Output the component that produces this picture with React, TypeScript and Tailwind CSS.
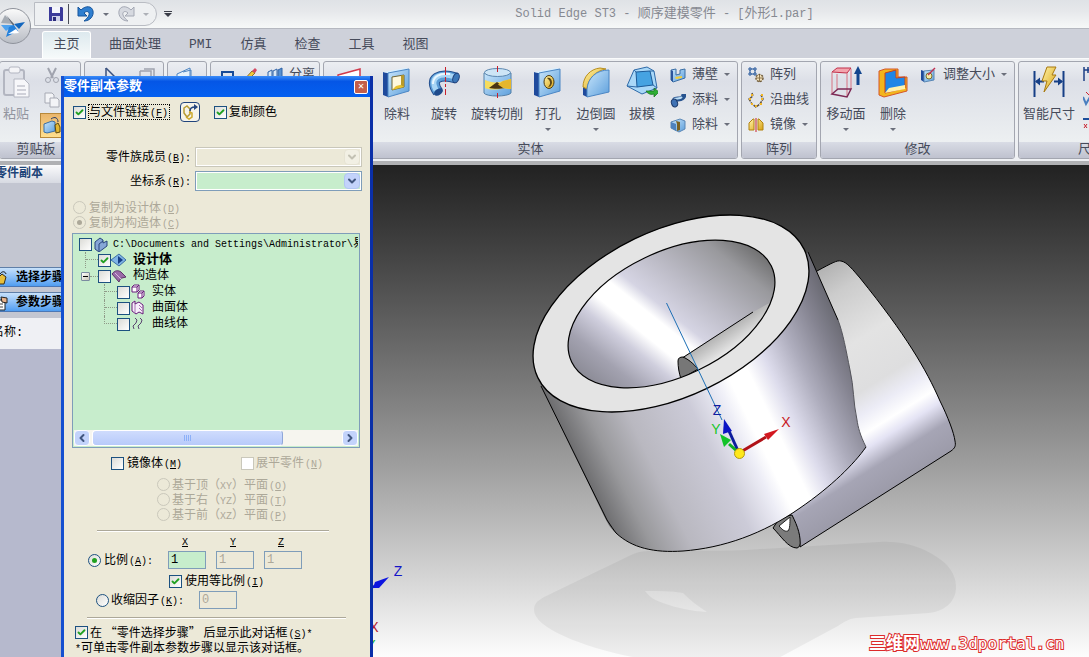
import type { ReactNode } from "react";
import { Check, ChevronDown, ChevronLeft, ChevronRight } from "lucide-react";

/* ---------- icons ---------- */

function Svg({ size = 32, children }: { size?: number; children: ReactNode }) {
    return (
        <svg width={size} height={size} viewBox={`0 0 ${size} ${size}`} fill="none" className="shrink-0">
            {children}
        </svg>
    );
}

function IconDefs() {
    return (
        <svg width="0" height="0" className="absolute">
            <defs>
                <linearGradient id="blueFace" x1="0" y1="0" x2="1" y2="1">
                    <stop offset="0" stopColor="#c9e6fb" />
                    <stop offset="1" stopColor="#5d9fdc" />
                </linearGradient>
                <linearGradient id="goldFace" x1="0" y1="0" x2="1" y2="1">
                    <stop offset="0" stopColor="#fff3a8" />
                    <stop offset="1" stopColor="#d9a417" />
                </linearGradient>
            </defs>
        </svg>
    );
}

const CutoutIcon = () => (
    <Svg>
        <path d="M2 6l5 1v24l-5-2z" fill="#1f4a9c" />
        <path d="M2 6l5 1 21-3-3-2z" fill="#d8efff" />
        <path d="M7 7l21-4v22L7 31z" fill="url(#blueFace)" stroke="#4b86c4" />
        <path d="M11 11l12-2v12l-12 3z" fill="#fff8dc" stroke="#6d6330" />
        <path d="M11 24l4-4 8-2v3l-12 3z" fill="#e8c22e" />
        <path d="M20 9.500l3-.5v12l-3-2z" fill="#b99a2a" />
    </Svg>
);

const RevolveIcon = () => (
    <Svg>
        <path d="M10 26C0 12 12 7 28 12" stroke="#234f8f" strokeWidth="11" />
        <path d="M10 26C0 12 12 7 28 12" stroke="#5b9cd6" strokeWidth="9" />
        <path d="M8 24C1 11 12 6 27 11" stroke="#a9d6f6" strokeWidth="5" />
        <path d="M5 18C5 10 12 7 22 8" stroke="#eaf7ff" strokeWidth="2" />
        <ellipse cx="28" cy="12" rx="3" ry="5" fill="#3c77b8" stroke="#1d3f7a" transform="rotate(20 28 12)" />
        <ellipse cx="10.500" cy="26" rx="5" ry="3" fill="#1f4b8c" transform="rotate(-35 10.5 26)" />
        <path d="M17.500 1v8m0 2v5m0 2v3m0 2v6" stroke="#c8202c" />
    </Svg>
);

const RevolveCutIcon = () => (
    <Svg>
        <path d="M3 7v20c2 4 24 4 27 0V7z" fill="url(#blueFace)" stroke="#5580a8" />
        <path d="M4 14c6 3 14 3 18 1l8-2v10l-8-1c-5 2-13 2-18 0z" fill="#f7dd5c" />
        <path d="M8 22l8-6 8 6c-4 1-12 1-16 0z" fill="#4a3413" />
        <path d="M22 15l8-2v10l-8-1-5-3.500z" fill="#e5b62b" />
        <ellipse cx="16.500" cy="6.500" rx="13" ry="4" fill="#cde5f6" stroke="#5c87b0" />
        <path d="M16.500 0v6m0 21v5" stroke="#c8202c" />
    </Svg>
);

const HoleIcon = () => (
    <Svg>
        <path d="M2 6l5 1v24l-5-2z" fill="#1f4a9c" />
        <path d="M2 6l5 1 21-3-3-2z" fill="#d8efff" />
        <path d="M7 7l21-4v22L7 31z" fill="url(#blueFace)" stroke="#4b86c4" />
        <ellipse cx="17" cy="16" rx="5" ry="6.500" fill="url(#goldFace)" stroke="#4c3d16" />
        <path d="M15 12c3-1 5 1 5 5-1 3-2 4-4 4 3-3 3-6-1-9z" fill="#5b4616" />
    </Svg>
);

const RoundIcon = () => (
    <Svg>
        <path d="M3 20l4 2v9l-4-2z" fill="#1f4a9c" />
        <path d="M3 21C3 11 10 3 20 2l6 1C15 5 8 13 7 23z" fill="url(#goldFace)" stroke="#b98e1c" />
        <path d="M7 31v-8C8 12 16 4 29 4v22z" fill="url(#blueFace)" stroke="#4b86c4" />
    </Svg>
);

const DraftIcon = () => (
    <Svg>
        <path d="M8 4l13-3 7 4 3 17-15 6-15-8z" fill="#a9d8f8" stroke="#2f6aa8" />
        <path d="M10 6l14-1 3 14-16 2z" fill="#46a3e2" stroke="#1c5a98" />
        <path d="M8 4l2 2M28 5l-4 0M1 20l10 1M27 19l4 3" stroke="#2f6aa8" />
        <path d="M20 25c2 3 5 4 8 3v3l5-5-5-4v3c-3 0-5 0-8 0z" fill="#2fae35" stroke="#14701a" strokeWidth="0.7" />
    </Svg>
);

const MoveFaceIcon = () => (
    <Svg>
        <path d="M2 6l5-4h14l-4 5z" fill="#f3a5ae" stroke="#c2304a" />
        <path d="M2 6v22M17 7v24M21 3v20M7 8v15" stroke="#d87282" />
        <path d="M2 28l6-5h13l-4 8z" stroke="#7d2a55" strokeWidth="1.500" />
        <path d="M28 19V5" stroke="#12458e" strokeWidth="3" />
        <path d="M24 8l4-8 4 8z" fill="#12458e" />
    </Svg>
);

const DeleteFaceIcon = () => (
    <Svg>
        <path d="M2 5l6-2 13 0v8l9 0v14L7 31l-5-2z" fill="#f2b51d" stroke="#d4552a" />
        <path d="M8 7l11-3v8l9-1v11L8 27z" fill="#1f86e6" stroke="#c9401c" />
        <path d="M8 27l4-5 16-3v4z" fill="#fff2ae" />
    </Svg>
);

const SmartDimIcon = () => (
    <Svg>
        <path d="M1.500 5v26M30.500 5v26" stroke="#163f86" strokeWidth="2" />
        <path d="M3 15.500h8M21 15.500h8" stroke="#163f86" strokeWidth="2" />
        <path d="M2 15.500l5-4v8zM30 15.500l-5-4v8z" fill="#163f86" />
        <path d="M14 1h9l-4 8h4L11 26l3-11h-5z" fill="url(#goldFace)" stroke="#a8790f" />
    </Svg>
);

const ExtrudeIcon = () => (
    <Svg>
        <path d="M5 9l22-6v10H5z" fill="#fff" stroke="#d13a4c" strokeWidth="1.500" />
        <path d="M5 13l22-2v18H5z" fill="url(#blueFace)" />
    </Svg>
);

const PasteIcon = () => (
    <Svg>
        <rect x="4" y="4" width="20" height="25" rx="2" fill="#dfe1e8" stroke="#b3b6c1" strokeWidth="2" />
        <rect x="9" y="1" width="11" height="6" rx="2" fill="#f4f4f7" stroke="#b3b6c1" />
        <path d="M14 13h10l5 5v13H14z" fill="#f7f7fa" stroke="#b3b6c1" />
        <path d="M17 20h8M17 24h9M17 28h9" stroke="#c3c5ce" strokeWidth="1.500" />
    </Svg>
);

const ThinWallIcon = () => (
    <Svg size={16}>
        <path d="M1 3l5-1v6l4-1V3l5-1v9L3 15l-2-2z" fill="url(#blueFace)" stroke="#3a6ea5" />
        <path d="M5 10l7-1v2l-6 1z" fill="#f3cf3a" />
        <path d="M1 3l2 1v11l-2-2z" fill="#2b559c" />
    </Svg>
);

const AddIcon = () => (
    <Svg size={16}>
        <path d="M4 8c2-2 6 0 8-2 2-1 2-3 2-4" stroke="#27538f" strokeWidth="5" />
        <path d="M4 7c3-1 6 0 8-2" stroke="#b9dcf5" strokeWidth="2" />
        <ellipse cx="4.500" cy="11" rx="3" ry="4" fill="#3f72b4" stroke="#1f3d6e" transform="rotate(-20 4.5 11)" />
    </Svg>
);

const CutIcon = () => (
    <Svg size={16}>
        <path d="M1 5l9-3 5 2v8l-6 3-8-4z" fill="url(#blueFace)" stroke="#5b87b5" />
        <path d="M6 4l4 1v8l-3 1V7z" fill="#7a6224" />
        <path d="M1 5l5 2v7l-5-3z" fill="#4e82bd" />
    </Svg>
);

const PatternIcon = () => (
    <Svg size={16}>
        <path d="M1 1h2v2H1zM6 1h2v2H6zM1 6h2v2H1zM6 6h2v2H6zM3 2h3M2 3v3M7 3v3M3 7h3" stroke="#27599c" />
        <circle cx="11.500" cy="11" r="3.500" fill="#f5e3bc" stroke="#6e5a3b" strokeDasharray="2 1" strokeWidth="1.500" />
        <path d="M8 11h7M11.500 8v7" stroke="#8a744e" />
    </Svg>
);

const AlongCurveIcon = () => (
    <Svg size={16}>
        <path d="M4 1l1 3-4 3 3 5 4 3 4-3 3-5-2-4" stroke="#5d4f3f" strokeWidth="1.500" strokeDasharray="3 1" />
        <path d="M3 3h2M1 7h2M3 12h2M7 14h2M12 12h2M13 7h2M13 3h2" stroke="#f1b524" strokeWidth="2" />
    </Svg>
);

const MirrorIcon = () => (
    <Svg size={16}>
        <path d="M1 6l4-4 1 0v11H1zM15 6l-4-4h-1v11h5z" fill="url(#goldFace)" stroke="#b3820f" />
        <path d="M8 1v14" stroke="#c8202c" />
    </Svg>
);

const ResizeIcon = () => (
    <Svg size={16}>
        <path d="M0 3l3 1v11l-3-2z" fill="#1f4a9c" />
        <path d="M3 4l10-1v10L3 15z" fill="url(#blueFace)" stroke="#5b87b5" />
        <circle cx="8" cy="9" r="3" fill="#f6eda8" stroke="#7c6d2c" />
        <path d="M7 8l7-7" stroke="#c03050" strokeWidth="1.500" />
    </Svg>
);

/* ---------- ribbon ---------- */

function Arrow() {
    return <span className="border-x-[3px] border-t-[3px] border-x-transparent border-t-[#6b6f7b]" />;
}

function BigButton({ icon, label, width, menu }: { icon: ReactNode; label: string; width: string; menu?: boolean }) {
    return (
        <button className={`flex shrink-0 flex-col items-center pt-1 ${width}`}>
            {icon}
            <span className="mt-2 h-[18px] leading-[18px] whitespace-nowrap">{label}</span>
            {menu && <span className="mt-1 flex"><Arrow /></span>}
        </button>
    );
}

function SmallButton({ icon, label, menu }: { icon: ReactNode; label: string; menu?: boolean }) {
    return (
        <button className="flex h-[25px] items-center gap-[6px] whitespace-nowrap">
            {icon}
            <span>{label}</span>
            {menu && <Arrow />}
        </button>
    );
}

function Group({ title, width, children }: { title?: string; width: string; children: ReactNode }) {
    return (
        <section className={`flex h-[98px] flex-col overflow-hidden rounded-[3px] border border-[#a3a6b0] bg-linear-to-b from-[#eceef2] from-0% via-[#dcdfe7] via-20% to-[#f1f4f4] ${width}`}>
            <div className="flex h-20 min-w-0">{children}</div>
            <h2 className="h-4 bg-linear-to-b from-[#d9dce5] to-[#bfc2cf] text-center leading-4">{title}</h2>
        </section>
    );
}

function Ribbon() {
    return (
        <div className="flex h-[107px] shrink-0 gap-[3px] overflow-hidden border-t border-[#fafbfc] border-b-4 border-b-[#b0b1b4] bg-[#eef0f3] pt-[2px] text-[13px] text-[#464b5a]">
            <Group title="剪贴板" width="w-[82px] shrink-0 -ml-px pr-[8px]">
                <button className="flex w-8 shrink-0 flex-col items-center pt-1 text-[#92959f]">
                    <PasteIcon />
                    <span className="mt-2 leading-[18px] whitespace-nowrap">粘贴</span>
                </button>
                <div className="flex w-9 shrink-0 flex-col items-start pl-2">
                    <button className="flex h-[25px] items-center pl-1" aria-label="剪切">
                        <Svg size={16}>
                            <path d="M4 1l5 10M12 1L7 11" stroke="#a0a3ae" strokeWidth="2" />
                            <circle cx="4" cy="13" r="2.500" stroke="#a0a3ae" />
                            <circle cx="12" cy="13" r="2.500" stroke="#a0a3ae" />
                        </Svg>
                    </button>
                    <button className="flex h-[25px] items-center pl-1" aria-label="复制">
                        <Svg size={16}>
                            <path d="M1 1h7l2 2v8H1z" fill="#f3f4f7" stroke="#a7aab4" />
                            <path d="M6 6h7l2 2v7H6z" fill="#f3f4f7" stroke="#a7aab4" />
                        </Svg>
                    </button>
                    <button className="mt-px flex h-[25px] w-[26px] items-center border border-[#b8893a] bg-linear-to-b from-[#e9b56c] to-[#ffdf8e] pl-[2px]" aria-label="零件副本">
                        <Svg size={20}>
                            <path d="M1 8l8-3 3 1v9l-8 2-3-1z" fill="url(#blueFace)" stroke="#3a6ea5" />
                            <path d="M8 3c4-3 7-1 7 3" stroke="#233a6a" />
                            <path d="M12 9l3-2 2 4v5l-4 1z" fill="#e2b631" stroke="#5c4a12" />
                        </Svg>
                    </button>
                </div>
            </Group>
            <Group width="w-[80px] shrink-0">
                <Svg size={70}>
                    <path d="M21 6v22l6-6 4 9" stroke="#39507e" strokeWidth="1.500" />
                    <path d="M21 6l14 14" stroke="#39507e" strokeWidth="1.500" />
                    <path d="M59 7h10v10M55 9h11v11M55 9v12" stroke="#a0a3ae" strokeWidth="1.500" />
                </Svg>
            </Group>
            <Group width="w-[40px] shrink-0">
                <Svg size={38}>
                    <path d="M9 12l13-6v20H9z" fill="#e6f2fb" stroke="#4c83c0" />
                    <path d="M15 10l8-2v14" stroke="#4c83c0" />
                </Svg>
            </Group>
            <Group width="w-[110px] shrink-0">
                <div className="flex h-[25px] items-center gap-[6px] pl-[10px]">
                    <Svg size={14}><rect x="1" y="4" width="11" height="9" stroke="#174a97" strokeWidth="2" /></Svg>
                    <Svg size={16}>
                        <path d="M2 14l9-10 3 2-9 9z" fill="#f3c93d" stroke="#91702b" />
                        <path d="M11 4l3-3 2 2-2 3z" fill="#d54a63" />
                        <path d="M2 15l1-4 3 3z" fill="#372a22" />
                    </Svg>
                    <button className="ml-1 flex items-center gap-[6px] whitespace-nowrap">
                        <Svg size={16}>
                            <path d="M1 5l4-2v11l-4 1zM6 4l4-2v11l-4 1z" fill="#d9e8f6" stroke="#2f62a6" />
                            <path d="M11 3l4-2v11l-4 1z" fill="#5790cf" stroke="#2f62a6" />
                        </Svg>
                        分离
                    </button>
                </div>
            </Group>
            <Group title="实体" width="w-[415px] shrink-0">
                <BigButton icon={<ExtrudeIcon />} label="拉伸" width="w-[50px]" />
                <BigButton icon={<CutoutIcon />} label="除料" width="w-[46px]" />
                <BigButton icon={<RevolveIcon />} label="旋转" width="w-12" />
                <BigButton icon={<RevolveCutIcon />} label="旋转切削" width="w-[58px]" />
                <BigButton icon={<HoleIcon />} label="打孔" width="w-11" menu />
                <BigButton icon={<RoundIcon />} label="边倒圆" width="w-[52px]" menu />
                <BigButton icon={<DraftIcon />} label="拔模" width="w-10" />
                <div className="ml-2 flex flex-col">
                    <SmallButton icon={<ThinWallIcon />} label="薄壁" menu />
                    <SmallButton icon={<AddIcon />} label="添料" menu />
                    <SmallButton icon={<CutIcon />} label="除料" menu />
                </div>
            </Group>
            <Group title="阵列" width="w-[76px] shrink-0">
                <div className="ml-[6px] flex flex-col">
                    <SmallButton icon={<PatternIcon />} label="阵列" />
                    <SmallButton icon={<AlongCurveIcon />} label="沿曲线" />
                    <SmallButton icon={<MirrorIcon />} label="镜像" menu />
                </div>
            </Group>
            <Group title="修改" width="w-[195px] shrink-0">
                <BigButton icon={<MoveFaceIcon />} label="移动面" width="w-[50px]" menu />
                <BigButton icon={<DeleteFaceIcon />} label="删除" width="w-11" menu />
                <div className="ml-[6px] flex flex-col">
                    <SmallButton icon={<ResizeIcon />} label="调整大小" menu />
                </div>
            </Group>
            <Group title="尺寸" width="w-[146px] shrink-0">
                <BigButton icon={<SmartDimIcon />} label="智能尺寸" width="w-[60px]" />
                <div className="ml-1 flex flex-col gap-[9px] pt-1">
                    <Svg size={16}><path d="M1 1v14M1 4h8M5 1v6" stroke="#1d3f86" strokeWidth="1.500" /></Svg>
                    <Svg size={16}><path d="M0 6l3 7 4-7" stroke="#4a7fc0" strokeWidth="2" /><path d="M3 1l4 4" stroke="#c8202c" /></Svg>
                    <Svg size={16}><path d="M0 3h10v10" stroke="#1d4f9c" strokeWidth="2" /><path d="M1 8l3 4M4 8l-3 4" stroke="#c8202c" /></Svg>
                </div>
            </Group>
        </div>
    );
}

function TitleBar() {
    return (
        <header className="flex h-7 shrink-0 items-center bg-linear-to-b from-[#dfe2e6] via-[#e6e8eb] via-40% to-[#f6f8f8] pl-[34px]">
            <div className="flex h-6 w-[123px] items-center gap-1 rounded-r-full border border-[#b9bcc3] bg-[#eef0f2] pl-[13px]">
                <button aria-label="保存">
                    <Svg size={16}>
                        <path d="M1 1h13l1 1v13H1z" fill="#3b3a9a" />
                        <path d="M4 1h8v6H4z" fill="#f4f5fc" />
                        <path d="M4 10h8v5H4z" fill="#cfd2ea" />
                        <path d="M5 11h3v4H5z" fill="#2c2b7a" />
                    </Svg>
                </button>
                <span className="h-5 w-px bg-[#4a4d58]" />
                <button className="ml-1" aria-label="撤消">
                    <Svg size={18}>
                        <path d="M1 2v9h9l-3-3c3-3 6-1 5 2-1 3-3 4-5 6 6 0 10-5 9-10C15 1 9 0 4 5z" fill="#2f7fd0" stroke="#17559c" />
                    </Svg>
                </button>
                <span className="mx-1 flex"><Arrow /></span>
                <button aria-label="重做">
                    <Svg size={18}>
                        <path d="M17 2v9H8l3-3C8 5 5 7 6 10c1 3 3 4 5 6C5 16 1 11 2 6 3 1 9 0 14 5z" fill="#d6d9e0" stroke="#a4a8b4" />
                    </Svg>
                </button>
                <span className="ml-1 flex opacity-50"><Arrow /></span>
            </div>
            <button className="ml-[7px] flex flex-col items-center gap-px" aria-label="自定义">
                <span className="h-px w-2 bg-[#3a3d48]" />
                <span className="border-x-4 border-t-4 border-x-transparent border-t-[#3a3d48]" />
            </button>
            <h1 className="flex-1 pl-[68px] text-center text-[13px] whitespace-pre text-[#868991]">
                <span className="text-[12px]">Solid Edge ST3 - </span>顺序建模零件<span className="text-[12px]"> - [</span>外形<span className="text-[12px]">1.par]</span>
            </h1>
            <button className="absolute top-2 -left-[5px] size-9 rounded-full border border-[#8f939c] bg-linear-to-b from-[#fafafa] to-[#b9bdc5]" aria-label="应用程序按钮">
                <svg viewBox="0 0 34 34" className="size-full">
                    <path d="M9 6l8 9-12-1z" fill="#a5abb3" />
                    <path d="M5 16l13 0-8 6z" fill="#4ea2ee" />
                    <path d="M10 6l8 9 0 3z" fill="#5f6772" />
                    <path d="M18 15l11-2-6 7z" fill="#1266bd" />
                    <path d="M10 28l3-10 5-2 4 6z" fill="#2380dc" />
                    <path d="M12 25l8-5 3 4z" fill="#fff" />
                </svg>
            </button>
        </header>
    );
}

const tabs = ["曲面处理", "PMI", "仿真", "检查", "工具", "视图"];

function Tabs() {
    return (
        <nav className="flex h-[30px] shrink-0 items-end border-t border-[#b5b8c0] bg-[#ced1da] pl-[42px] text-[13px] text-[#464b5a]">
            <button className="h-[27px] w-[49px] rounded-t-[3px] border border-b-0 border-white bg-linear-to-b from-[#dde9ee] to-[#f6fafa]">主页</button>
            <div className="ml-1 flex">
                {tabs.map((t) => (
                    <button key={t} className="h-[27px] px-[14px]">{t}</button>
                ))}
            </div>
        </nav>
    );
}

/* ---------- left pane ---------- */

function StepButton({ icon, label }: { icon: ReactNode; label: string }) {
    return (
        <button className="-ml-2 flex h-5 items-center gap-2 overflow-hidden border-y border-t-[#5f7fa8] border-b-[#4b77b5] bg-linear-to-b from-[#c7e1fb] to-[#4f9df0] pt-px font-bold whitespace-nowrap text-black">
            {icon}
            {label}
        </button>
    );
}

function SidePane() {
    return (
        <aside className="flex w-[371px] shrink-0 flex-col overflow-hidden bg-[#b6b9cd] text-[12px]">
            <h2 className="h-[18px] bg-linear-to-b from-[#fbfbfc] to-[#d7dae2] leading-[18px] font-bold text-[#1d4478]"><span className="-ml-[5px]">零件副本</span></h2>
            <div className="flex flex-col gap-[5px] bg-[#c3c6d1] pt-[84px] pb-[6px]">
                <StepButton
                    label="选择步骤"
                    icon={<Svg size={16}><path d="M5 9l5-5 4 3-2 7H4z" fill="#e8bf3a" stroke="#3c2f10" /><path d="M8 4c2-3 5-3 6 0" stroke="#111" /></Svg>}
                />
                <StepButton
                    label="参数步骤"
                    icon={<Svg size={16}><path d="M3 5h10v10H3z" fill="#fff" stroke="#222" /><path d="M9 2l6 1v5l-5-1z" fill="#e9b48c" stroke="#222" /><path d="M5 9h6M5 12h6" stroke="#444" /></Svg>}
                />
            </div>
            <div className="h-[31px] bg-[#eff0f4] leading-[30px]"><span className="-ml-[8px]">名称:</span></div>
        </aside>
    );
}

/* ---------- dialog ---------- */

function Tick({ id, checked, disabled }: { id: string; checked?: boolean; disabled?: boolean }) {
    return (
        <span className="relative flex size-[13px] shrink-0">
            <input
                id={id}
                type="checkbox"
                defaultChecked={checked}
                disabled={disabled}
                className="peer size-[13px] appearance-none border border-[#1c5180] bg-linear-to-br from-[#dcdcd7] to-white disabled:border-[#cac8bb] disabled:bg-none disabled:bg-white"
            />
            <Check className="pointer-events-none absolute top-0.5 left-0.5 hidden size-[9px] text-[#21a121] peer-checked:block" strokeWidth={5} />
        </span>
    );
}

function Radio({ id, name, checked, disabled }: { id: string; name: string; checked?: boolean; disabled?: boolean }) {
    return (
        <span className="relative flex size-[13px] shrink-0">
            <input
                id={id}
                name={name}
                type="radio"
                defaultChecked={checked}
                disabled={disabled}
                className="peer size-[13px] appearance-none rounded-full border border-[#1c5180] bg-linear-to-br from-[#dcdcd7] to-white disabled:border-[#cac8bb] disabled:bg-none"
            />
            <span className="pointer-events-none absolute top-1 left-1 hidden size-[5px] rounded-full bg-[#21a121] peer-checked:block peer-disabled:bg-[#aca899]" />
        </span>
    );
}

/* access key in brackets, set a size smaller than the Chinese text */
function Key({ k, after = "" }: { k: string; after?: string }) {
    return <span className="ml-px text-[10px]">(<u>{k}</u>){after}</span>;
}

function Caption({ id, className = "", children }: { id: string; className?: string; children: ReactNode }) {
    return <label htmlFor={id} className={`pt-[2px] whitespace-nowrap ${className}`}>{children}</label>;
}

function Combo({ id, disabled }: { id: string; disabled?: boolean }) {
    return (
        <span className="relative h-5 w-[167px]">
            <select
                id={id}
                disabled={disabled}
                className="block h-5 w-full appearance-none border border-[#7f9db9] bg-[#c7edcc] ring-1 ring-white ring-inset disabled:border-[#c9c7ba] disabled:bg-[#ece9d8]"
            />
            <span className={`pointer-events-none absolute top-0.5 right-0.5 flex h-4 w-4 items-center justify-center rounded-sm border ${disabled ? "border-[#e6e3d3] bg-[#f2f0e4] text-[#c3c1b3]" : "border-[#b1c6f3] bg-[#c3d3fb] text-[#41567f]"}`}>
                <ChevronDown className="size-3" strokeWidth={4} />
            </span>
        </span>
    );
}

function Branch({ last }: { last?: boolean }) {
    if (last) return <span className="h-2 w-[13px] self-start border-b border-l border-dotted border-[#8f9a88]" />;
    return (
        <span className="h-4 w-[13px] border-l border-dotted border-[#8f9a88]">
            <span className="block h-2 border-b border-dotted border-[#8f9a88]" />
        </span>
    );
}

const row = "flex h-4 items-center whitespace-nowrap";

function BodyTree() {
    return (
        <div className="mt-[3px] mr-[10px] ml-2 flex h-[215px] flex-col border border-[#7f9db9] bg-[#c7edcc] p-px">
            <ul className="flex-1 overflow-hidden pt-px text-[12px]">
                <li className={`${row} pl-[5px]`}>
                    <Tick id="t-root" />
                    <Svg size={16}><path d="M3 6l5-4 3 2v3l4-2v5l-8 6-4-3z" fill="#86a6d6" stroke="#29457f" /><path d="M7 8v7M7 8l4-3" stroke="#29457f" /></Svg>
                    <label htmlFor="t-root" className="ml-[5px]"><span className="text-[10px]">C:\Documents and Settings\Administrator\</span>易</label>
                </li>
                <li className={`${row} pl-[11px]`}>
                    <Branch />
                    <Tick id="t-design" checked />
                    <Svg size={16}><path d="M0 8l8-6 7 6-7 6z" fill="#7fb4e6" stroke="#3a6ea5" /><path d="M7 4v8l5-4z" fill="#163f86" /></Svg>
                    <label htmlFor="t-design" className="ml-[6px] text-[13px] font-bold">设计体</label>
                </li>
                <li className={`${row} pl-[7px]`}>
                    <button className="flex size-[9px] items-center justify-center rounded-[1px] border border-[#7b8ba0] bg-linear-to-br from-white to-[#c8c5b5]" aria-label="折叠">
                        <span className="h-px w-[5px] bg-black" />
                    </button>
                    <span className="w-2 border-t border-dotted border-[#8f9a88]" />
                    <Tick id="t-cons" />
                    <Svg size={16}><path d="M1 6c3-4 6-4 9-2l5 5-4 1c-1 0-2 1-3 4z" fill="#9a6aa8" stroke="#5c3468" /><path d="M4 5l6 6" stroke="#d9b9e0" /></Svg>
                    <label htmlFor="t-cons" className="ml-[6px]">构造体</label>
                </li>
                <li className={`${row} pl-[30px]`}>
                    <Branch />
                    <Tick id="t-solid" />
                    <Svg size={16}><path d="M2 3l2-2h5v5l-2 2H2zM2 3h5v5M7 3l2-2M8 9l2-2h4v5l-2 2H8zM8 9h4v5M12 9l2-2" fill="#fff" stroke="#6a1d7c" /></Svg>
                    <label htmlFor="t-solid" className="ml-[6px]">实体</label>
                </li>
                <li className={`${row} pl-[30px]`}>
                    <Branch />
                    <Tick id="t-surf" />
                    <Svg size={16}><path d="M2 3l3-2v3l4-2 4 3v9l-4-2-3 2-4-3z" fill="#f7eefa" stroke="#6a1d7c" /><path d="M5 4v9M9 5l3 3M9 8l3 3" stroke="#a573b2" /></Svg>
                    <label htmlFor="t-surf" className="ml-[6px]">曲面体</label>
                </li>
                <li className={`${row} pl-[30px]`}>
                    <Branch last />
                    <Tick id="t-curve" />
                    <Svg size={16}><path d="M5 2l2 2-1 3-3 3 1 3M10 2l2 2-1 3-3 3 1 3" stroke="#5a4470" /></Svg>
                    <label htmlFor="t-curve" className="ml-[6px]">曲线体</label>
                </li>
            </ul>
            <div className="flex h-4 justify-between bg-[#f6f5ef]">
                <button className="flex w-4 items-center justify-center rounded-sm border border-white bg-[#c3d3fb] text-[#41567f]" aria-label="向左"><ChevronLeft className="size-3" strokeWidth={4} /></button>
                <div className="mr-auto ml-0.5 flex w-[191px] items-center justify-center gap-px rounded-sm border border-white border-r-[#8fa6d8] bg-linear-to-b from-[#cfdcfd] to-[#b7cafa]">
                    <i className="h-[6px] w-px bg-[#8cb0f8]" /><i className="h-[6px] w-px bg-[#8cb0f8]" /><i className="h-[6px] w-px bg-[#8cb0f8]" /><i className="h-[6px] w-px bg-[#8cb0f8]" />
                </div>
                <button className="flex w-4 items-center justify-center rounded-sm border border-white bg-[#c3d3fb] text-[#41567f]" aria-label="向右"><ChevronRight className="size-3" strokeWidth={4} /></button>
            </div>
        </div>
    );
}

const planes = [
    { side: "顶", axes: "XY", k: "O" },
    { side: "右", axes: "YZ", k: "T" },
    { side: "前", axes: "XZ", k: "P" },
];

const field = "h-[18px] w-[38px] border border-[#7f9db9] bg-[#c7edcc] px-[2px] text-[12px] disabled:bg-[#ece9d8] disabled:text-[#aca899]";

function PartCopyDialog() {
    return (
        <div role="dialog" aria-label="零件副本参数" className="absolute top-[76px] bottom-0 left-[61px] flex w-[312px] flex-col overflow-hidden border-x-[3px] border-r-[#0a2fa8] border-l-[#1550d0] bg-[#ece9d8] text-[12px] text-black">
            <div className="flex h-[21px] shrink-0 items-center justify-between bg-linear-to-b from-[#3a8cf8] via-[#0556e6] via-25% to-[#0460f0] pr-[2px] text-[13px] font-bold text-white">
                零件副本参数
                <button className="flex size-[14px] items-center justify-center rounded-[2px] border border-white bg-[#c45f4a] text-[10px]" aria-label="关闭">✕</button>
            </div>

            <div className="flex h-[25px] shrink-0 items-center pt-[5px] pl-[9px]">
                <Tick id="link" checked />
                <label htmlFor="link" className="ml-[2px] flex h-4 items-center border border-dotted border-black pt-[2px] pr-px whitespace-nowrap">与文件链接<Key k="F" /></label>
                <button className="ml-[10px] flex size-5 items-center justify-center rounded-sm border border-[#21447c] bg-[#f6f4ea]" aria-label="更新链接">
                    <Svg size={16}>
                        <path d="M2 4l3-2 3 3v5l-3 3-3-4z" stroke="#b79c35" strokeWidth="1.500" />
                        <path d="M7 8l3 1v4l-3 2-3-2" stroke="#cda92c" strokeWidth="1.500" />
                        <path d="M8 7c0-3 2-4 5-4" stroke="#26477f" strokeWidth="1.500" />
                        <path d="M12 0l4 3-4 3z" fill="#26477f" />
                    </Svg>
                </button>
                <span className="ml-[14px] flex"><Tick id="color" checked /></span>
                <Caption id="color" className="ml-[2px]">复制颜色</Caption>
            </div>

            <div className="mt-[25px] flex h-5 items-center justify-end pr-2">
                <Caption id="family" className="mr-1">零件族成员<Key k="B" after=":" /></Caption>
                <Combo id="family" disabled />
            </div>
            <div className="mt-1 flex h-5 items-center justify-end pr-2">
                <Caption id="coord" className="mr-1">坐标系<Key k="R" after=":" /></Caption>
                <Combo id="coord" />
            </div>

            <div className="mt-[9px] pl-[9px] text-[#aca899]">
                <div className="flex h-[15px] items-center gap-[3px]">
                    <Radio id="as-design" name="copy-as" disabled />
                    <Caption id="as-design">复制为设计体<Key k="D" /></Caption>
                </div>
                <div className="flex h-[15px] items-center gap-[3px]">
                    <Radio id="as-cons" name="copy-as" checked disabled />
                    <Caption id="as-cons">复制为构造体<Key k="C" /></Caption>
                </div>
            </div>

            <BodyTree />

            <div className="mt-[7px] flex h-4 items-center gap-[3px] pl-[47px]">
                <Tick id="mirror" />
                <Caption id="mirror">镜像体<Key k="M" /></Caption>
                <span className="ml-14 flex items-center gap-[2px] text-[#aca899]">
                    <Tick id="flat" disabled />
                    <Caption id="flat">展平零件<Key k="N" /></Caption>
                </span>
            </div>

            <div className="mt-[6px] pl-[93px] text-[#aca899]">
                {planes.map((p) => (
                    <div key={p.axes} className="flex h-[15px] items-center gap-[2px]">
                        <Radio id={p.axes} name="plane" disabled />
                        <Caption id={p.axes}>基于{p.side}（<span className="text-[10px]">{p.axes}</span>）平面<Key k={p.k} /></Caption>
                    </div>
                ))}
            </div>

            <hr className="mt-2 mr-[41px] ml-[33px] border-t-[#aca899] border-b border-b-white" />

            <div className="mt-0.5 flex h-4 items-center gap-[10px] pl-[102px] text-center text-[10px]">
                <label htmlFor="sx" className="w-[38px]"><u>X</u></label>
                <label htmlFor="sy" className="w-[38px]"><u>Y</u></label>
                <label htmlFor="sz" className="w-[38px]"><u>Z</u></label>
            </div>
            <div className="mt-px flex h-[18px] items-center pl-6">
                <Radio id="scale" name="scale-mode" checked />
                <Caption id="scale" className="ml-[3px] w-16">比例<Key k="A" after=":" /></Caption>
                <div className="flex gap-[10px]">
                    <input id="sx" className={field} defaultValue="1" />
                    <input id="sy" className={field} defaultValue="1" disabled />
                    <input id="sz" className={field} defaultValue="1" disabled />
                </div>
            </div>
            <div className="mt-1 flex h-4 items-center gap-[3px] pl-[105px]">
                <Tick id="uniform" checked />
                <Caption id="uniform">使用等比例<Key k="I" /></Caption>
            </div>
            <div className="mt-0.5 flex h-[18px] items-center pl-8">
                <Radio id="shrink" name="scale-mode" />
                <Caption id="shrink" className="ml-[2px] w-[88px]">收缩因子<Key k="K" after=":" /></Caption>
                <input className={field} defaultValue="0" disabled aria-label="收缩因子" />
            </div>

            <hr className="mt-2 mr-6 ml-[23px] border-t-[#aca899] border-b border-b-white" />

            <div className="mt-[5px] flex h-4 items-center gap-[2px] pl-[11px]">
                <Tick id="show" checked />
                <Caption id="show">在<span className="font-['Noto_Sans_CJK_SC']"> “零件选择步骤” </span>后显示此对话框<Key k="S" after="*" /></Caption>
            </div>
            <p className="h-4 shrink-0 pl-[11px] leading-[18px] whitespace-nowrap"><span className="text-[10px]">*</span>可单击零件副本参数步骤以显示该对话框。</p>
        </div>
    );
}

/* ---------- 3D view ---------- */

function ModelView() {
    return (
        <main className="relative min-w-0 flex-1 bg-linear-to-b from-[#222222] via-[#858585] via-50% to-[#fdfdfd]">
            <svg viewBox="371 165 718 492" preserveAspectRatio="xMinYMin slice" className="absolute inset-0 size-full">
                <defs>
                    <linearGradient id="outer" gradientUnits="userSpaceOnUse" x1="538" y1="378" x2="804" y2="249">
                        <stop offset="0" stopColor="#6e6e70" />
                        <stop offset="0.1" stopColor="#99999c" />
                        <stop offset="0.22" stopColor="#b9b8c0" />
                        <stop offset="0.42" stopColor="#cccbd8" />
                        <stop offset="0.53" stopColor="#ededf6" />
                        <stop offset="0.58" stopColor="#ffffff" />
                        <stop offset="0.65" stopColor="#ffffff" />
                        <stop offset="0.72" stopColor="#dddcec" />
                        <stop offset="0.82" stopColor="#aeadbd" />
                        <stop offset="0.93" stopColor="#83828f" />
                        <stop offset="1" stopColor="#6b6b74" />
                    </linearGradient>
                    <linearGradient id="inner" gradientUnits="userSpaceOnUse" x1="572" y1="362" x2="771" y2="266">
                        <stop offset="0" stopColor="#85858f" />
                        <stop offset="0.15" stopColor="#a3a2b0" />
                        <stop offset="0.27" stopColor="#cfcedd" />
                        <stop offset="0.35" stopColor="#ffffff" />
                        <stop offset="0.44" stopColor="#ffffff" />
                        <stop offset="0.5" stopColor="#d5d4e3" />
                        <stop offset="0.65" stopColor="#bcbbc6" />
                        <stop offset="0.85" stopColor="#99999d" />
                        <stop offset="1" stopColor="#666666" />
                    </linearGradient>
                    <linearGradient id="arm" gradientUnits="userSpaceOnUse" x1="835" y1="262" x2="954" y2="452">
                        <stop offset="0" stopColor="#b4b4b4" />
                        <stop offset="0.12" stopColor="#cccccc" />
                        <stop offset="0.35" stopColor="#e3e3e3" />
                        <stop offset="0.55" stopColor="#dededf" />
                        <stop offset="0.64" stopColor="#ececf6" />
                        <stop offset="0.72" stopColor="#ffffff" />
                        <stop offset="0.78" stopColor="#e4e3f4" />
                        <stop offset="0.87" stopColor="#a6a5b5" />
                        <stop offset="1" stopColor="#9b9aa8" />
                    </linearGradient>
                    <linearGradient id="peg" gradientUnits="userSpaceOnUse" x1="715" y1="335" x2="727" y2="353">
                        <stop offset="0" stopColor="#b0b0b0" />
                        <stop offset="1" stopColor="#e8e8e8" />
                    </linearGradient>
                    <clipPath id="bore">
                        <ellipse cx="671.5" cy="314" rx="110.800" ry="62.200" transform="rotate(-25.7 671.5 314)" />
                    </clipPath>
                </defs>

                {/* shadow on the floor */}
                <path
                    d="M534 610c0-6 3-9 10-13l87-42c8-4 14-4 23-4 40-1 66 1 106-2l119-7c15-1 28 1 41 6 26 11 36 24 36 39 0 14-10 24-27 26l-73 5c-8 1-12 4-18 8l-65 35H655c-60-9-121-31-121-51zM645 591c5 6 9 9 18 12 14 5 28 8 44 9-8-5-16-11-24-19-12-2-25-2-38-2z"
                    fill="#000"
                    fillOpacity="0.05"
                    fillRule="evenodd"
                />

                {/* arm */}
                <path d="M773 528c8 8 15 20 24 20 6-2 5-14-4-34l-14 5z" fill="#7b7b7b" stroke="#000" />
                <path d="M779 526l11-9c0 6 0 12-2 14-4 1-6-2-9-5z" fill="#fff" stroke="#222" />
                <path
                    d="M800 547l151-96c4-3 5-5 4-10-1-8-7-24-15-40-14-32-34-66-80-123-7-8-13-16-19-17-4-1-9 2-24 10l-60 60v190l35-6c6 12 9 21 8 32z"
                    fill="url(#arm)"
                    stroke="#000"
                />

                {/* main tube */}
                <path
                    d="M538 380l66 136c4 8 6 12 12 17 16 15 38 20 67 18 40-3 80-17 117-43 32-22 54-44 66-61-6-12-8-20-9-27-4-18-3-33-7-50-4-20-7-37-12-50l-30-68-270 128z"
                    fill="url(#outer)"
                />
                <path d="M541 386l66 134c4 6 6 9 9 13 16 15 38 20 67 18 40-3 80-17 117-43 32-22 54-44 66-61M808 252l30 68" stroke="#000" fill="none" />
                <path d="M838 320c5 13 8 30 12 50 4 17 3 32 7 50 1 7 3 15 9 27" stroke="#55555c" fill="none" />
                <ellipse cx="671" cy="313.5" rx="147.800" ry="83" transform="rotate(-25.7 671 313.5)" fill="#e4e4e4" stroke="#000" strokeWidth="1.300" />
                <ellipse cx="671.5" cy="314" rx="110.800" ry="62.200" transform="rotate(-25.7 671.5 314)" fill="url(#inner)" />
                <g clipPath="url(#bore)">
                    <path d="M683 357l70-45 40-22v60l-95 20z" fill="url(#peg)" />
                    <path d="M678 361c0-3 2-4 5-4 5 2 11 7 15 12l-17 10c-2-6-3-12-3-18z" fill="#777" stroke="#000" />
                    <path d="M683 357.500L753 312" stroke="#000" />
                </g>
                <ellipse cx="671.5" cy="314" rx="110.800" ry="62.200" transform="rotate(-25.7 671.5 314)" fill="none" stroke="#000" strokeWidth="1.200" />

                {/* axes at the part origin */}
                <path d="M666.500 303L722 420" stroke="#1d6fb5" />
                <path d="M739 453l-10-22" stroke="#0c1c9c" strokeWidth="3" />
                <path d="M724 419l-1 15 9-3z" fill="#0c14c4" />
                <path d="M739 453l-10-9" stroke="#0fae22" strokeWidth="3" />
                <path d="M720 434l4 13 7-7z" fill="#12c328" />
                <path d="M739 453l27-16" stroke="#b01218" strokeWidth="3" />
                <path d="M779 429l-15 5 4 6z" fill="#d31820" />
                <circle cx="739.5" cy="453.5" r="5" fill="#ffe81a" stroke="#b29a10" />
                <g fontFamily="Liberation Sans" fontSize="14" textAnchor="middle">
                    <text x="717" y="415" fill="#101ca0">Z</text>
                    <text x="716" y="434" fill="#16c62a">Y</text>
                    <text x="786" y="427" fill="#c8181e">X</text>
                    <text x="398" y="576" fill="#1414c8">Z</text>
                    <text x="374" y="632" fill="#b01830">X</text>
                    <text x="371" y="650" fill="#16b62a">Y</text>
                </g>
                <path d="M360 594l14-8" stroke="#0c14c4" strokeWidth="3" />
                <path d="M389 577l-14 5-2 6h6z" fill="#0c14e0" />

                <text x="869" y="649" fontSize="17" fontFamily="Noto Sans CJK SC, sans-serif" fontWeight="bold" fill="#fff" stroke="#dc2a2a" strokeWidth="2" paintOrder="stroke">
                    三维网<tspan fontSize="16" fontWeight="normal" fontFamily="DejaVu Sans Mono">www.3dportal.cn</tspan>
                </text>
            </svg>
        </main>
    );
}

export default function App() {
    return (
        <div className="relative flex h-screen flex-col overflow-hidden bg-[#ced1da] font-['Liberation_Mono','Noto_Sans_CJK_SC',monospace]">
            <IconDefs />
            <TitleBar />
            <Tabs />
            <Ribbon />
            <div className="flex min-h-0 flex-1">
                <SidePane />
                <ModelView />
            </div>
            <PartCopyDialog />
        </div>
    );
}
